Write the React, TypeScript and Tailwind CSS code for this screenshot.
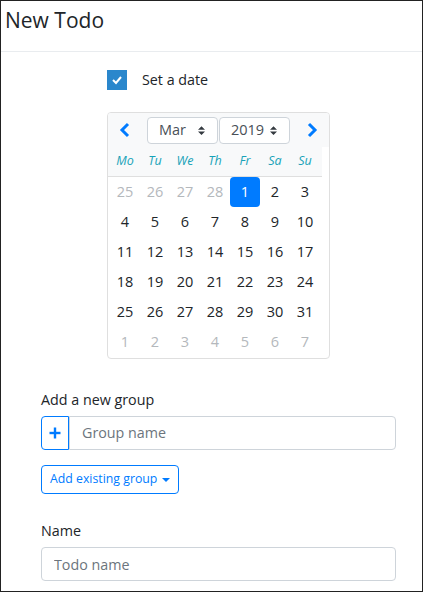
import React from "react";

const weeks: { d: number; muted?: boolean; sel?: boolean }[][] = [
  [{ d: 25, muted: true }, { d: 26, muted: true }, { d: 27, muted: true }, { d: 28, muted: true }, { d: 1, sel: true }, { d: 2 }, { d: 3 }],
  [4, 5, 6, 7, 8, 9, 10].map((d) => ({ d })),
  [11, 12, 13, 14, 15, 16, 17].map((d) => ({ d })),
  [18, 19, 20, 21, 22, 23, 24].map((d) => ({ d })),
  [25, 26, 27, 28, 29, 30, 31].map((d) => ({ d })),
  [1, 2, 3, 4, 5, 6, 7].map((d) => ({ d, muted: true })),
];

const weekdays = ["Mo", "Tu", "We", "Th", "Fr", "Sa", "Su"];

function Chevron({ dir }: { dir: "left" | "right" }) {
  return (
    <button className="w-[34px] h-full flex items-center justify-center">
      <svg width="12" height="16" viewBox="0 0 12 16" fill="none" stroke="#007bff" strokeWidth="3">
        {dir === "left" ? <polyline points="9,2 3,8 9,14" /> : <polyline points="3,2 9,8 3,14" />}
      </svg>
    </button>
  );
}

function FakeSelect({ value }: { value: string }) {
  return (
    <div className="w-[71px] h-[27px] bg-white border border-[#ced4da] rounded-[4px] flex items-center justify-between pl-[11px] pr-[12px]">
      <span className="text-[14.5px] leading-none text-[#495057]">{value}</span>
      <svg width="7" height="9" viewBox="0 0 4 5">
        <path fill="#343a40" d="M2 0L0 2h4zm0 5L0 3h4z" />
      </svg>
    </div>
  );
}

function Calendar() {
  return (
    <div className="w-[223px] border border-[#dfdfdf] rounded-[4px] overflow-hidden">
      <div className="h-[34px] bg-[#f8f9fa] flex items-center">
        <Chevron dir="left" />
        <div className="ml-[5px] flex gap-px">
          <FakeSelect value="Mar" />
          <FakeSelect value="2019" />
        </div>
        <div className="ml-[5px] h-full">
          <Chevron dir="right" />
        </div>
      </div>
      <div className="w-[214px] h-[30px] bg-[#f8f9fa] border-b border-[#dfdfdf] px-[2px] flex items-center">
        {weekdays.map((w) => (
          <div key={w} className="w-[30px] text-center italic text-[12.5px] text-[#17a2b8]">
            {w}
          </div>
        ))}
      </div>
      <div className="px-[2px] pb-px">
        {weeks.map((row, i) => (
          <div key={i} className="flex">
            {row.map((c, j) => (
              <div
                key={j}
                className={
                  "w-[30px] h-[30px] flex items-center justify-center text-[14.5px] rounded-[4px] " +
                  (c.sel ? "bg-[#007bff] text-white" : c.muted ? "text-[#b4b8bc]" : "text-[#212529]")
                }
              >
                {c.d}
              </div>
            ))}
          </div>
        ))}
      </div>
    </div>
  );
}

export default function App() {
  return (
    <div className="w-[423px] h-[592px] border border-[#222] bg-white overflow-hidden font-['Open_Sans',sans-serif] text-[#212529] text-[14.3px]">
      <div className="h-[51px] border-b border-[#e9ecef] pl-[4px] pt-[6px]">
        <h4 className="text-[21px] leading-[27px]">New Todo</h4>
      </div>

      <div className="ml-[40px] w-[355px]">
        <div className="flex justify-center pt-[18px]">
          <div>
            <div className="flex items-center h-[20px]">
              <div className="w-[20px] h-[20px] bg-[#2a87cc] flex items-center justify-center">
                <svg width="12" height="10" viewBox="0 0 12 10" fill="none" stroke="white" strokeWidth="2">
                  <polyline points="2,5 5,8 10,2" />
                </svg>
              </div>
              <span className="ml-[15px] leading-[20px]">Set a date</span>
            </div>
            <div className="mt-[22px]">
              <Calendar />
            </div>
          </div>
        </div>

        <label className="block mt-[30px] leading-[22px]">Add a new group</label>
        <div className="mt-[5px] flex h-[34px]">
          <button className="w-[28px] border border-[#007bff] rounded-l-[4px] flex items-center justify-center">
            <svg width="12" height="12" viewBox="0 0 12 12" stroke="#007bff" strokeWidth="2.4">
              <line x1="6" y1="0.5" x2="6" y2="11.5" />
              <line x1="0.5" y1="6" x2="11.5" y2="6" />
            </svg>
          </button>
          <input
            className="flex-1 border border-[#ced4da] rounded-r-[4px] pl-[12px] text-[14.3px] placeholder:text-[#6c757d] outline-none"
            placeholder="Group name"
          />
        </div>

        <button className="mt-[15px] h-[29px] px-[8px] border border-[#007bff] rounded-[4px] text-[#007bff] text-[12.3px] flex items-center">
          Add existing group
          <span className="ml-[5px] w-0 h-0 border-t-[4px] border-t-[#007bff] border-x-[4px] border-x-transparent" />
        </button>

        <label className="block mt-[26px] leading-[22px]">Name</label>
        <input
          className="mt-[5px] w-full h-[34px] border border-[#ced4da] rounded-[4px] pl-[12px] text-[14.3px] placeholder:text-[#6c757d] outline-none"
          placeholder="Todo name"
        />
      </div>
    </div>
  );
}
